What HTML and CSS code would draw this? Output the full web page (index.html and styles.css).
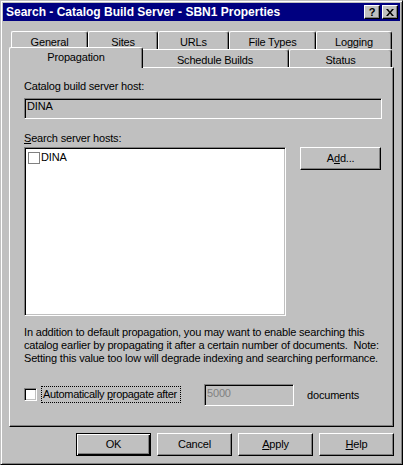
FILE: index.html
```html
<!DOCTYPE html>
<html>
<head>
<meta charset="utf-8">
<link rel="stylesheet" href="styles.css">
</head>
<body>
<div class="window">
  <div class="titlebar">
    <span class="title">Search - Catalog Build Server - SBN1 Properties</span>
    <div class="caption-btns">
      <div class="cbtn help">?</div>
      <div class="cbtn close">
        <svg width="8" height="7" viewBox="0 0 8 7"><path d="M0 0h2l2 2.4L6 0h2L5 3.5 8 7H6L4 4.6 2 7H0l3-3.5z" fill="#000"/></svg>
      </div>
    </div>
  </div>
  <div class="dlg">
    <div class="tabs">
      <div class="tab-row">
        <div class="tab t-general">General</div>
        <div class="tab t-sites">Sites</div>
        <div class="tab t-urls">URLs</div>
        <div class="tab t-types">File Types</div>
        <div class="tab t-logging">Logging</div>
      </div>
      <div class="tab-row">
        <div class="tab active t-prop">Propagation</div>
        <div class="tab t-sched">Schedule Builds</div>
        <div class="tab t-status">Status</div>
      </div>
    </div>
    <div class="panel">
      <div class="label">Catalog build server host:</div>
      <div class="field host sunken">DINA</div>
      <div class="label label2"><u>S</u>earch server hosts:</div>
      <div class="hosts-row">
        <div class="list sunken">
          <div class="item"><span class="mini-check"></span><span>DINA</span></div>
        </div>
        <div class="btn add">A<u>d</u>d...</div>
      </div>
      <p class="note">In addition to default propagation, you may want to enable searching this<br>catalog earlier by propagating it after a certain number of documents.&nbsp; Note:<br>Setting this value too low will degrade indexing and searching performance.</p>
      <div class="auto-row">
        <span class="check sunken"></span>
        <span class="focus">Automatically <u>p</u>ropagate after</span>
        <div class="field count sunken">5000</div>
        <span class="docs">documents</span>
      </div>
    </div>
    <div class="footer">
      <div class="btn default">OK</div>
      <div class="btn">Cancel</div>
      <div class="btn"><u>A</u>pply</div>
      <div class="btn"><u>H</u>elp</div>
    </div>
  </div>
</div>
</body>
</html>
```
FILE: styles.css
```css
* { box-sizing: border-box; }
body {
  margin: 0;
  background: #c0c0c0;
  font-family: "Liberation Sans", Arial, sans-serif;
  font-size: 11px;
  letter-spacing: -0.18px;
  color: #000;
}
u { text-decoration: underline; text-underline-offset: 1px; }
.window {
  width: 403px;
  height: 465px;
  border: 1px solid;
  border-color: #c0c0c0 #000 #000 #c0c0c0;
  box-shadow: inset 1px 1px #fff, inset -1px -1px #808080;
  padding: 2px;
  background: #c0c0c0;
  display: flex;
  flex-direction: column;
}
.titlebar {
  height: 18px;
  flex: none;
  background: #000080;
  color: #fff;
  display: flex;
  align-items: center;
  padding: 0 2px 0 3px;
}
.title {
  flex: 1;
  font-weight: bold;
  font-size: 12px;
  letter-spacing: 0;
  white-space: nowrap;
}
.caption-btns { display: flex; gap: 2px; }
.cbtn {
  width: 16px;
  height: 14px;
  background: #c0c0c0;
  border: 1px solid;
  border-color: #fff #000 #000 #fff;
  box-shadow: inset -1px -1px #808080;
  display: flex;
  align-items: center;
  justify-content: center;
  color: #000;
  font-weight: bold;
  font-size: 11px;
  line-height: 11px;
  letter-spacing: 0;
}
.dlg {
  flex: 1;
  padding: 10px 6px 0;
  display: flex;
  flex-direction: column;
}
.tabs { display: flex; flex-direction: column; }
.tab-row { display: flex; margin: 0 2px; height: 18px; }
.tab {
  flex: none;
  height: 18px;
  border: 1px solid;
  border-bottom: none;
  border-color: #fff #000 #000 #fff;
  border-radius: 2px 3px 0 0;
  box-shadow: inset -1px 0 #808080;
  background: #c0c0c0;
  display: flex;
  align-items: center;
  justify-content: center;
  padding-top: 2px;
  white-space: nowrap;
}
.tab.active {
  height: 21px;
  margin: -2px -2px -1px;
  position: relative;
  z-index: 1;
  padding-top: 0;
  padding-bottom: 2px;
}
.t-general { width: 77px; }
.t-sites { width: 70px; }
.t-urls { width: 71px; }
.t-types { width: 87px; }
.t-logging { width: 76px; }
.t-prop { width: 134px; }
.t-sched { width: 148px; }
.t-status { width: 103px; }
.panel {
  height: 360px;
  flex: none;
  border: 1px solid;
  border-color: #fff #000 #000 #fff;
  box-shadow: inset -1px -1px #808080;
  padding: 12px 12px 0 14px;
}
.label { line-height: 13px; height: 13px; white-space: nowrap; }
.label2 { margin-top: 13px; }
.sunken {
  border: 1px solid;
  border-color: #808080 #fff #fff #808080;
  box-shadow: inset 1px 1px #000, inset -1px -1px #c0c0c0;
}
.field {
  background: #c0c0c0;
  padding: 1px 2px 0;
  line-height: 12px;
  white-space: nowrap;
}
.host { margin-top: 5px; height: 21px; width: 358px; }
.hosts-row {
  margin-top: 2px;
  display: flex;
  gap: 14px;
  height: 169px;
}
.list {
  width: 263px;
  height: 169px;
  background: #fff;
  padding: 3px 2px;
}
.item { display: flex; align-items: center; gap: 1px; line-height: 13px; padding-left: 1px; }
.mini-check {
  width: 12px;
  height: 12px;
  border: 1px solid #808080;
  background: #fff;
}
.btn {
  width: 75px;
  height: 23px;
  background: #c0c0c0;
  border: 1px solid;
  border-color: #fff #000 #000 #fff;
  box-shadow: inset -1px -1px #808080;
  display: flex;
  align-items: center;
  justify-content: center;
  white-space: nowrap;
  line-height: 13px;
}
.add { width: 81px; }
.note {
  margin: 10px 0 0;
  line-height: 13px;
  white-space: nowrap;
}
.auto-row {
  margin-top: 18px;
  height: 23px;
  display: flex;
  align-items: center;
}
.check {
  width: 13px;
  height: 13px;
  background: #fff;
}
.focus {
  flex: none;
  margin-left: 4px;
  width: 140px;
  height: 17px;
  border: 1px dotted #000;
  padding: 0 0 0 1px;
  line-height: 14px;
  letter-spacing: -0.32px;
  white-space: nowrap;
}
.count {
  margin-left: 23px;
  width: 90px;
  height: 22px;
  color: #808080;
  line-height: 14px;
}
.docs { margin-left: 13px; white-space: nowrap; }
.footer {
  margin-top: 6px;
  display: flex;
  justify-content: flex-end;
  gap: 6px;
}
.btn.default {
  border-color: #000;
  box-shadow: inset 1px 1px #fff, inset -1px -1px #000, inset -2px -2px #808080;
}
```
